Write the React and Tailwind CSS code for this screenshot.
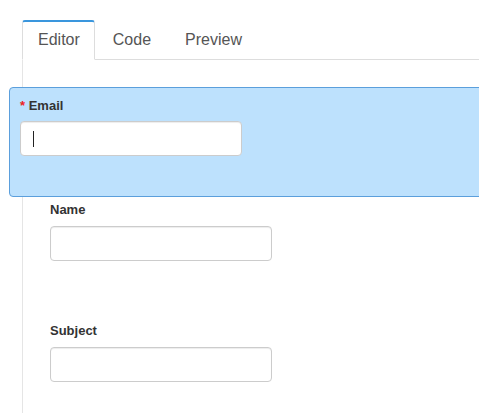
import React from 'react';

const tabs = ['Editor', 'Code', 'Preview'];

const Tabs = ({ active }) => {
  return (
    <div className="flex border-b border-[#dddddd]">
      {tabs.map((t) => (
        <div
          key={t}
          className={
            t === active
              ? 'mr-[2px] -mb-px border border-[#dddddd] border-t-2 border-t-[#3a96dd] border-b-white bg-white rounded-t-[3px] pl-[15px] pr-[14px] pt-[9px] pb-[10px] text-[16px] leading-[18px] text-[#555555]'
              : 'mr-[2px] -mb-px border border-transparent border-t-2 px-[15px] pt-[9px] pb-[10px] text-[16px] leading-[18px] text-[#555555]'
          }
        >
          {t}
        </div>
      ))}
    </div>
  );
};

const FieldInput = ({ caret }) => (
  <div className="w-[222px] h-[35px] rounded-[4px] border border-[#cccccc] bg-white shadow-[inset_0_1px_1px_rgba(0,0,0,0.075)] flex items-center pl-[12px]">
    {caret && <span className="w-px h-[16px] bg-[#222222]" />}
  </div>
);

const Field = ({ label, className }) => (
  <div className={className}>
    <div className="text-[13px] leading-[18px] font-bold text-[#333333] mb-[7px]">{label}</div>
    <FieldInput />
  </div>
);

export default function App() {
  return (
    <div className="w-full min-h-[413px] bg-white overflow-hidden font-['Liberation_Sans',Arial,sans-serif] pt-[20px] pl-[22px]">
      <Tabs active="Editor" />
      <div className="border-l border-[#e5e5e5] min-h-[353px] pl-[27px] pt-[27px]">
        {/* selected field being dragged */}
        <div className="-ml-[41px] w-[520px] h-[110px] rounded-[4px] border border-[#5b9fdc] bg-[#bde1fd] pl-[10px] pt-[9px]">
          <div className="text-[13px] leading-[18px] font-bold text-[#333333] mb-[6px]">
            <span className="text-[#ee2222]">*</span> Email
          </div>
          <FieldInput caret />
        </div>
        <Field label="Name" className="mt-[4px]" />
        <Field label="Subject" className="mt-[61px]" />
      </div>
    </div>
  );
}
